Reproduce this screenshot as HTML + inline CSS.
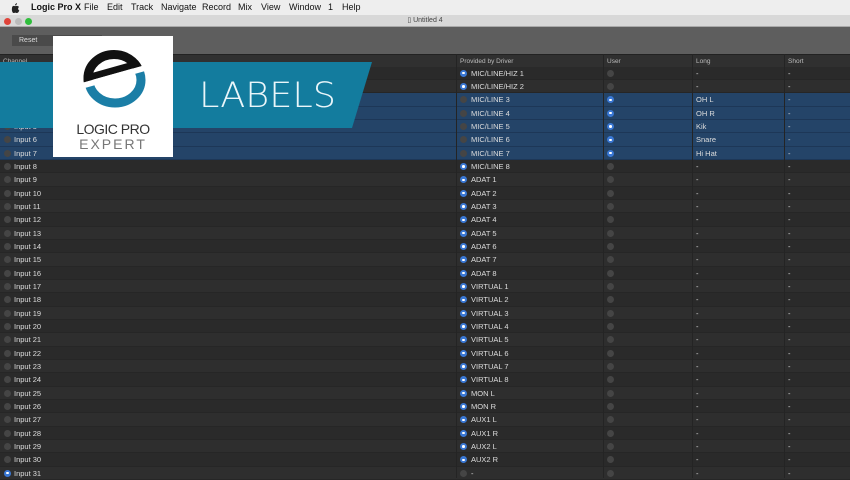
<!DOCTYPE html>
<html><head><meta charset="utf-8"><style>
*{margin:0;padding:0;box-sizing:border-box}
body{width:850px;height:478px;overflow:hidden;background:#2b2b2b;font-family:"Liberation Sans",sans-serif;position:relative}
.menu{position:absolute;top:0;left:0;width:850px;height:15px;background:#eeeeee;font-size:9px;color:#111;line-height:15px}
.menu span{position:absolute}
.title{position:absolute;top:15px;left:0;width:850px;height:12px;background:#d8d8d8;border-bottom:1px solid #aaa;font-size:7px;color:#444;text-align:center;line-height:12px}
.dotc{position:absolute;top:3px;width:7px;height:7px;border-radius:50%}
.tool{position:absolute;top:27px;left:0;width:850px;height:27px;background:#5e5e5e}
.reset{position:absolute;left:12px;top:8px;width:90px;height:11px;background:#4a4a4a;color:#ddd;font-size:7px;line-height:11px;padding-left:7px}
.hdr{position:absolute;top:54px;left:0;width:850px;height:13px;background:#303030;border-top:1px solid #222;font-size:6.5px;color:#bbb;line-height:13px}
.hdr span{position:absolute}
.r{position:absolute;left:0;width:850px;height:13.4px;font-size:7.5px;color:#ddd;line-height:13.4px;border-bottom:1px solid #262626}
.r.a{background:#2e2e2e}.r.b{background:#2a2a2a}.r.s{background:#244468;border-bottom-color:#1d3757}
.r span{position:absolute}
.d{position:absolute;top:3px;width:7px;height:7px;border-radius:50%;background:#454545}
.d.on{background:#3a78d4}
.d.on::after{content:"";position:absolute;left:2.3px;top:2.3px;width:2.5px;height:2.5px;border-radius:50%;background:#fff}
.vl{position:absolute;top:54px;bottom:0;width:1px;background:#242424}
</style></head><body>
<div class="menu"><svg style="position:absolute;left:11px;top:3px" width="9" height="10"><path d="M6,0 C6,1.5 5,2.5 4,2.4 C4,1.2 5,0.3 6,0Z M1,5 C1,3 2.5,2.6 3.5,3 C4,3.2 4.5,3.2 5,3 C6,2.6 7.3,3 8,4 C6.8,4.8 6.8,6.8 8.3,7.4 C7.8,8.8 7,10 6,10 C5.2,10 5,9.6 4.3,9.6 C3.6,9.6 3.3,10 2.6,10 C1.5,10 0.5,7.5 1,5Z" fill="#222"/></svg><span style="left:31px;font-weight:bold">Logic Pro X</span><span style="left:84px">File</span><span style="left:107px">Edit</span><span style="left:131px">Track</span><span style="left:161px">Navigate</span><span style="left:202px">Record</span><span style="left:238px">Mix</span><span style="left:261px">View</span><span style="left:289px">Window</span><span style="left:328px">1</span><span style="left:342px">Help</span></div>
<div class="title">▯ Untitled 4<div class="dotc" style="left:4px;background:#e0443a"></div><div class="dotc" style="left:15px;background:#bbb"></div><div class="dotc" style="left:25px;background:#2fbe3c"></div></div>
<div class="tool"><div class="reset">Reset</div></div>
<div class="hdr"><span style="left:3px">Channel</span><span style="left:460px">Provided by Driver</span><span style="left:607px">User</span><span style="left:696px">Long</span><span style="left:788px">Short</span></div>

<div class="r b" style="top:66.7px"><div class="d" style="left:4px"></div><span style="left:14px">Input 1</span><div class="d on" style="left:460px"></div><span style="left:471px">MIC/LINE/HIZ 1</span><div class="d" style="left:607px"></div><span style="left:696px">-</span><span style="left:788px">-</span></div>
<div class="r a" style="top:80px"><div class="d" style="left:4px"></div><span style="left:14px">Input 2</span><div class="d on" style="left:460px"></div><span style="left:471px">MIC/LINE/HIZ 2</span><div class="d" style="left:607px"></div><span style="left:696px">-</span><span style="left:788px">-</span></div>
<div class="r s" style="top:93.3px"><div class="d" style="left:4px"></div><span style="left:14px">Input 3</span><div class="d" style="left:460px"></div><span style="left:471px">MIC/LINE 3</span><div class="d on" style="left:607px"></div><span style="left:696px">OH L</span><span style="left:788px">-</span></div>
<div class="r s" style="top:106.7px"><div class="d" style="left:4px"></div><span style="left:14px">Input 4</span><div class="d" style="left:460px"></div><span style="left:471px">MIC/LINE 4</span><div class="d on" style="left:607px"></div><span style="left:696px">OH R</span><span style="left:788px">-</span></div>
<div class="r s" style="top:120px"><div class="d" style="left:4px"></div><span style="left:14px">Input 5</span><div class="d" style="left:460px"></div><span style="left:471px">MIC/LINE 5</span><div class="d on" style="left:607px"></div><span style="left:696px">Kik</span><span style="left:788px">-</span></div>
<div class="r s" style="top:133.3px"><div class="d" style="left:4px"></div><span style="left:14px">Input 6</span><div class="d" style="left:460px"></div><span style="left:471px">MIC/LINE 6</span><div class="d on" style="left:607px"></div><span style="left:696px">Snare</span><span style="left:788px">-</span></div>
<div class="r s" style="top:146.7px"><div class="d" style="left:4px"></div><span style="left:14px">Input 7</span><div class="d" style="left:460px"></div><span style="left:471px">MIC/LINE 7</span><div class="d on" style="left:607px"></div><span style="left:696px">Hi Hat</span><span style="left:788px">-</span></div>
<div class="r b" style="top:160px"><div class="d" style="left:4px"></div><span style="left:14px">Input 8</span><div class="d on" style="left:460px"></div><span style="left:471px">MIC/LINE 8</span><div class="d" style="left:607px"></div><span style="left:696px">-</span><span style="left:788px">-</span></div>
<div class="r a" style="top:173.3px"><div class="d" style="left:4px"></div><span style="left:14px">Input 9</span><div class="d on" style="left:460px"></div><span style="left:471px">ADAT 1</span><div class="d" style="left:607px"></div><span style="left:696px">-</span><span style="left:788px">-</span></div>
<div class="r b" style="top:186.7px"><div class="d" style="left:4px"></div><span style="left:14px">Input 10</span><div class="d on" style="left:460px"></div><span style="left:471px">ADAT 2</span><div class="d" style="left:607px"></div><span style="left:696px">-</span><span style="left:788px">-</span></div>
<div class="r a" style="top:200px"><div class="d" style="left:4px"></div><span style="left:14px">Input 11</span><div class="d on" style="left:460px"></div><span style="left:471px">ADAT 3</span><div class="d" style="left:607px"></div><span style="left:696px">-</span><span style="left:788px">-</span></div>
<div class="r b" style="top:213.3px"><div class="d" style="left:4px"></div><span style="left:14px">Input 12</span><div class="d on" style="left:460px"></div><span style="left:471px">ADAT 4</span><div class="d" style="left:607px"></div><span style="left:696px">-</span><span style="left:788px">-</span></div>
<div class="r a" style="top:226.7px"><div class="d" style="left:4px"></div><span style="left:14px">Input 13</span><div class="d on" style="left:460px"></div><span style="left:471px">ADAT 5</span><div class="d" style="left:607px"></div><span style="left:696px">-</span><span style="left:788px">-</span></div>
<div class="r b" style="top:240px"><div class="d" style="left:4px"></div><span style="left:14px">Input 14</span><div class="d on" style="left:460px"></div><span style="left:471px">ADAT 6</span><div class="d" style="left:607px"></div><span style="left:696px">-</span><span style="left:788px">-</span></div>
<div class="r a" style="top:253.3px"><div class="d" style="left:4px"></div><span style="left:14px">Input 15</span><div class="d on" style="left:460px"></div><span style="left:471px">ADAT 7</span><div class="d" style="left:607px"></div><span style="left:696px">-</span><span style="left:788px">-</span></div>
<div class="r b" style="top:266.7px"><div class="d" style="left:4px"></div><span style="left:14px">Input 16</span><div class="d on" style="left:460px"></div><span style="left:471px">ADAT 8</span><div class="d" style="left:607px"></div><span style="left:696px">-</span><span style="left:788px">-</span></div>
<div class="r a" style="top:280px"><div class="d" style="left:4px"></div><span style="left:14px">Input 17</span><div class="d on" style="left:460px"></div><span style="left:471px">VIRTUAL 1</span><div class="d" style="left:607px"></div><span style="left:696px">-</span><span style="left:788px">-</span></div>
<div class="r b" style="top:293.3px"><div class="d" style="left:4px"></div><span style="left:14px">Input 18</span><div class="d on" style="left:460px"></div><span style="left:471px">VIRTUAL 2</span><div class="d" style="left:607px"></div><span style="left:696px">-</span><span style="left:788px">-</span></div>
<div class="r a" style="top:306.7px"><div class="d" style="left:4px"></div><span style="left:14px">Input 19</span><div class="d on" style="left:460px"></div><span style="left:471px">VIRTUAL 3</span><div class="d" style="left:607px"></div><span style="left:696px">-</span><span style="left:788px">-</span></div>
<div class="r b" style="top:320px"><div class="d" style="left:4px"></div><span style="left:14px">Input 20</span><div class="d on" style="left:460px"></div><span style="left:471px">VIRTUAL 4</span><div class="d" style="left:607px"></div><span style="left:696px">-</span><span style="left:788px">-</span></div>
<div class="r a" style="top:333.3px"><div class="d" style="left:4px"></div><span style="left:14px">Input 21</span><div class="d on" style="left:460px"></div><span style="left:471px">VIRTUAL 5</span><div class="d" style="left:607px"></div><span style="left:696px">-</span><span style="left:788px">-</span></div>
<div class="r b" style="top:346.7px"><div class="d" style="left:4px"></div><span style="left:14px">Input 22</span><div class="d on" style="left:460px"></div><span style="left:471px">VIRTUAL 6</span><div class="d" style="left:607px"></div><span style="left:696px">-</span><span style="left:788px">-</span></div>
<div class="r a" style="top:360px"><div class="d" style="left:4px"></div><span style="left:14px">Input 23</span><div class="d on" style="left:460px"></div><span style="left:471px">VIRTUAL 7</span><div class="d" style="left:607px"></div><span style="left:696px">-</span><span style="left:788px">-</span></div>
<div class="r b" style="top:373.3px"><div class="d" style="left:4px"></div><span style="left:14px">Input 24</span><div class="d on" style="left:460px"></div><span style="left:471px">VIRTUAL 8</span><div class="d" style="left:607px"></div><span style="left:696px">-</span><span style="left:788px">-</span></div>
<div class="r a" style="top:386.7px"><div class="d" style="left:4px"></div><span style="left:14px">Input 25</span><div class="d on" style="left:460px"></div><span style="left:471px">MON L</span><div class="d" style="left:607px"></div><span style="left:696px">-</span><span style="left:788px">-</span></div>
<div class="r b" style="top:400px"><div class="d" style="left:4px"></div><span style="left:14px">Input 26</span><div class="d on" style="left:460px"></div><span style="left:471px">MON R</span><div class="d" style="left:607px"></div><span style="left:696px">-</span><span style="left:788px">-</span></div>
<div class="r a" style="top:413.3px"><div class="d" style="left:4px"></div><span style="left:14px">Input 27</span><div class="d on" style="left:460px"></div><span style="left:471px">AUX1 L</span><div class="d" style="left:607px"></div><span style="left:696px">-</span><span style="left:788px">-</span></div>
<div class="r b" style="top:426.7px"><div class="d" style="left:4px"></div><span style="left:14px">Input 28</span><div class="d on" style="left:460px"></div><span style="left:471px">AUX1 R</span><div class="d" style="left:607px"></div><span style="left:696px">-</span><span style="left:788px">-</span></div>
<div class="r a" style="top:440px"><div class="d" style="left:4px"></div><span style="left:14px">Input 29</span><div class="d on" style="left:460px"></div><span style="left:471px">AUX2 L</span><div class="d" style="left:607px"></div><span style="left:696px">-</span><span style="left:788px">-</span></div>
<div class="r b" style="top:453.3px"><div class="d" style="left:4px"></div><span style="left:14px">Input 30</span><div class="d on" style="left:460px"></div><span style="left:471px">AUX2 R</span><div class="d" style="left:607px"></div><span style="left:696px">-</span><span style="left:788px">-</span></div>
<div class="r a" style="top:466.7px"><div class="d on" style="left:4px"></div><span style="left:14px">Input 31</span><div class="d" style="left:460px"></div><span style="left:471px">-</span><div class="d" style="left:607px"></div><span style="left:696px">-</span><span style="left:788px">-</span></div>

<div class="vl" style="left:456px"></div><div class="vl" style="left:603px"></div><div class="vl" style="left:692px"></div><div class="vl" style="left:784px"></div>

<svg style="position:absolute;left:0;top:0" width="850" height="478">
<defs>
<clipPath id="top"><polygon points="60,20 170,20 170,58 60,89"/></clipPath>
<clipPath id="bot"><polygon points="60,95 170,64 170,130 60,130"/></clipPath>
<clipPath id="ell"><ellipse cx="114" cy="78" rx="30.5" ry="28"/></clipPath>
</defs>
<polygon points="0,62 372,62 352,128 0,128" fill="#137c9e"/>
<text x="199" y="107" font-family="DejaVu Sans,Liberation Sans,sans-serif" font-size="35" font-weight="200" fill="#eaf6fa" textLength="137" lengthAdjust="spacingAndGlyphs">LABELS</text>
<rect x="53" y="36" width="120" height="121" fill="#fff"/>
<g clip-path="url(#top)">
<ellipse cx="114" cy="78" rx="26" ry="23.5" fill="none" stroke="#111" stroke-width="9"/>
<g clip-path="url(#ell)"><polygon points="60,89 170,58 170,51 60,82" fill="#111"/></g>
</g>
<g clip-path="url(#bot)">
<ellipse cx="115" cy="80" rx="26" ry="23" fill="none" stroke="#1b7ea6" stroke-width="9"/>
</g>
<text x="113" y="134" text-anchor="middle" font-family="Liberation Sans,sans-serif" font-size="14" fill="#333" letter-spacing="-0.5">LOGIC PRO</text>
<text x="113" y="149" text-anchor="middle" font-family="Liberation Sans,sans-serif" font-size="14" fill="#777" letter-spacing="2">EXPERT</text>
</svg>
</body></html>
